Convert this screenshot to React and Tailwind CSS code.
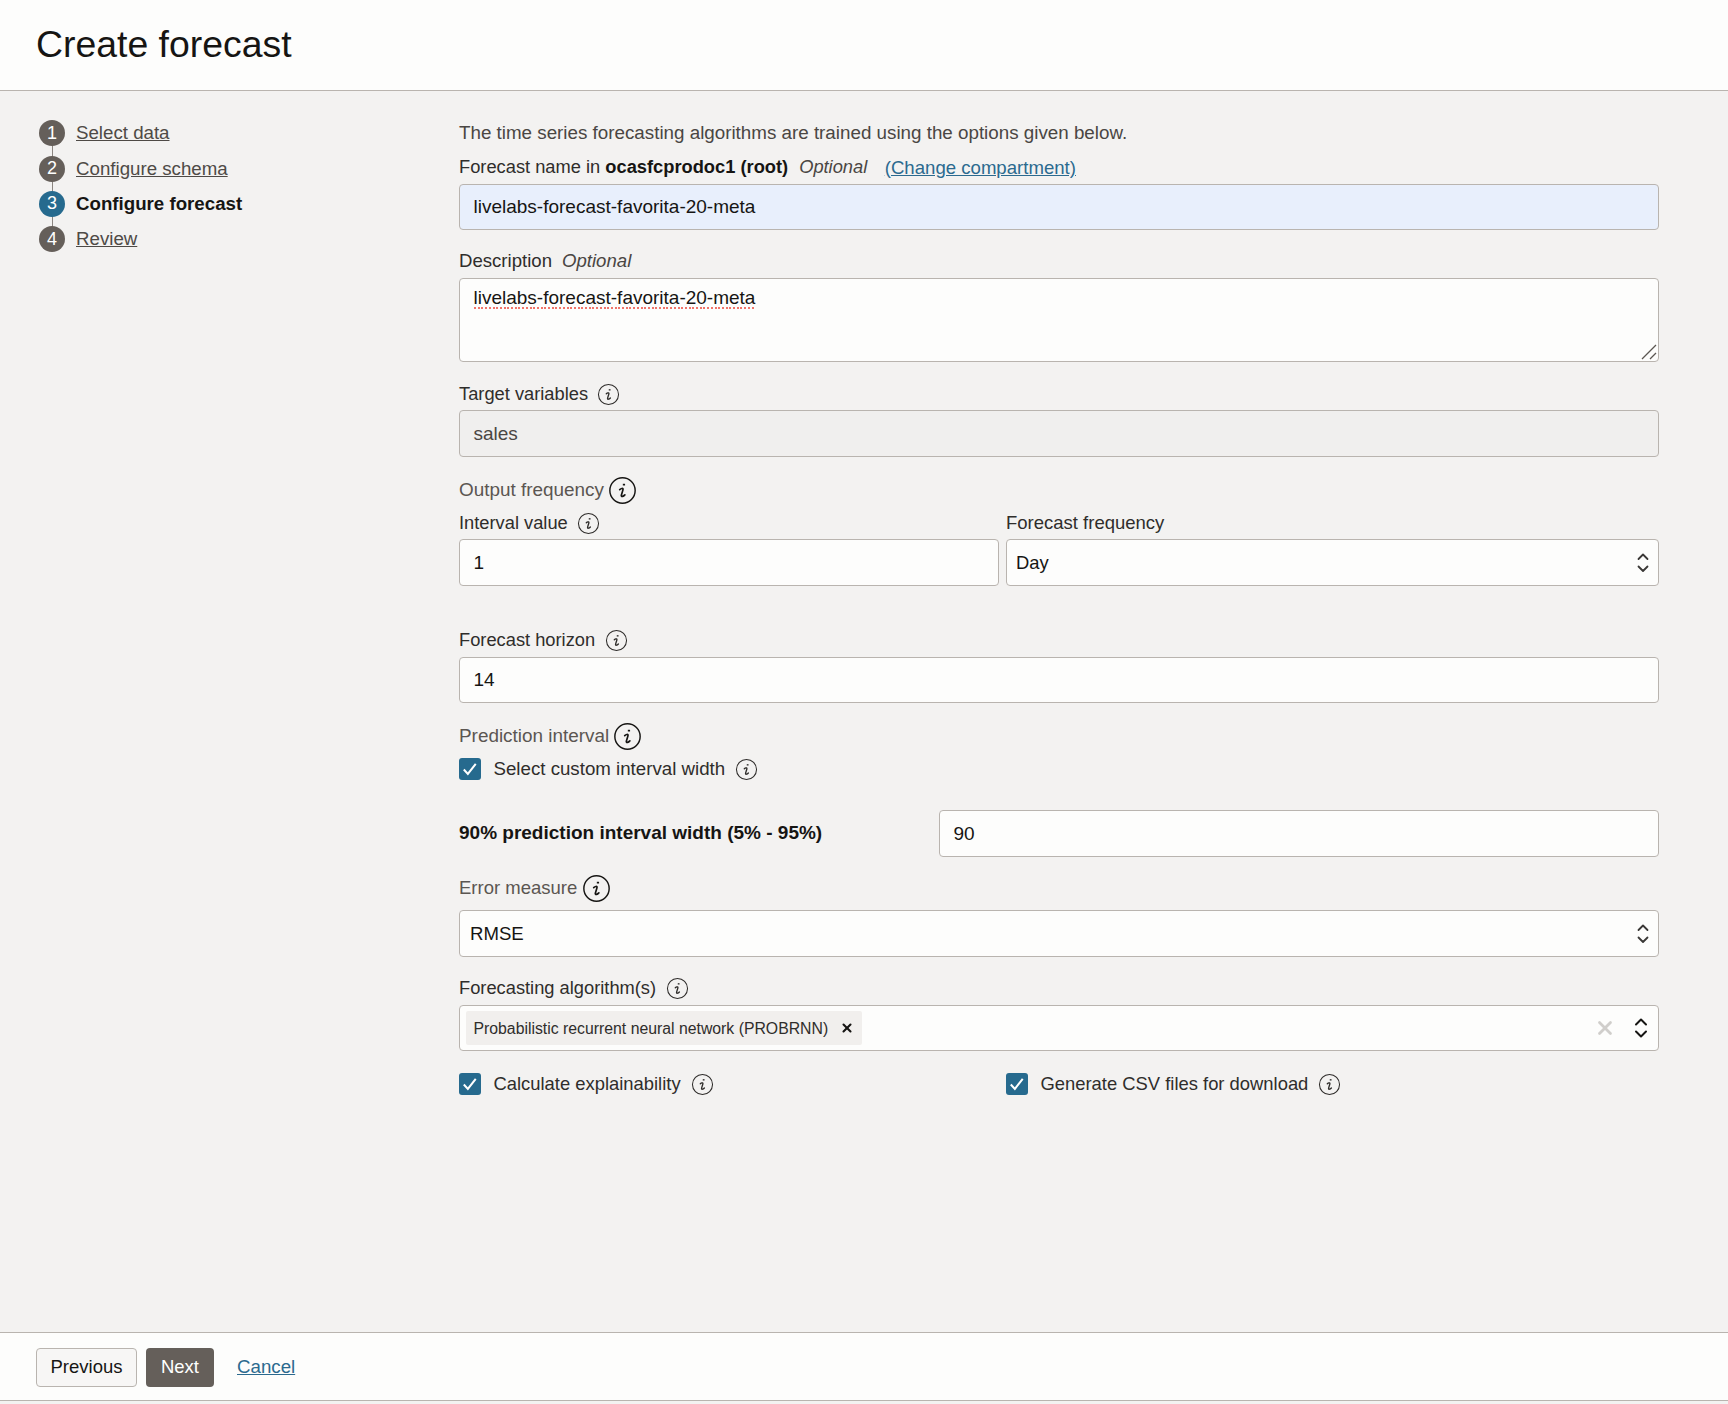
import { ChevronUp, ChevronDown, X } from 'lucide-react'

function Info({ big }) {
  const size = big ? 29 : 23
  return (
    <svg width={size} height={size} viewBox="0 0 22 22" fill="none" className="shrink-0" stroke={big ? '#161513' : '#2d2b29'}>
      <circle cx="11" cy="11" r="9.6" strokeWidth={big ? 1.1 : 1} />
      <path d="M12.1 5.9v1.3" strokeWidth="1.7" />
      <path d="M8.9 10.3c1-.9 2.4-1.2 2.5-.3.1.8-1.4 4.2-1.3 5 .1 1 1.5.5 2.7-.7" strokeWidth="1.3" strokeLinecap="round" />
    </svg>
  )
}

function Label({ children, className = '', muted }) {
  return (
    <div className={`h-6 flex items-center ${muted ? 'text-[18.9px] text-[#5b5652]' : 'text-[18.3px] text-[#2f2d2b]'} ${className}`}>
      {children}
    </div>
  )
}

function Field({ children, className = '', bg = 'bg-[#fdfdfc]' }) {
  return (
    <div className={`relative flex items-center border border-[#b9b4af] rounded-[4px] pl-[13.5px] text-[19px] text-[#161513] ${bg} ${className}`}>
      {children}
    </div>
  )
}

function Chevrons({ dark }) {
  return (
    <span className={`flex flex-col items-center absolute top-1/2 -translate-y-1/2 ${dark ? 'right-[7px] text-[#161513]' : 'right-[6px] text-[#3a3836]'}`}>
      <ChevronUp size={dark ? 20 : 18} strokeWidth={2.4} className={dark ? '-mb-[8px]' : '-mb-[5.5px]'} />
      <ChevronDown size={dark ? 20 : 18} strokeWidth={2.4} />
    </span>
  )
}

function Check({ label, size = 'text-[18.4px]' }) {
  return (
    <div className="h-[22px] flex items-center">
      <span className="w-[22px] h-[22px] rounded-[3px] bg-[#266a8e] flex items-center justify-center">
        <svg width="18" height="18" viewBox="0 0 16 16" fill="none" stroke="#fff" strokeWidth="1.8">
          <path d="M2.5 8.5l3.6 3.8 7-8.8" />
        </svg>
      </span>
      <span className={`ml-[12.5px] text-[#2f2d2b] ${size}`}>{label}</span>
      <span className="ml-[10px] flex"><Info /></span>
    </div>
  )
}

const steps = [
  { n: 1, name: 'Select data' },
  { n: 2, name: 'Configure schema' },
  { n: 3, name: 'Configure forecast', active: true },
  { n: 4, name: 'Review' },
]

export default function App() {
  return (
    <div className="min-h-[1404px] flex flex-col bg-[#f3f2f1] text-[#161513] font-['Liberation_Sans',Arial,sans-serif]">
      {/* Page title */}
      <header className="h-[91px] shrink-0 flex items-center px-9 bg-[#fdfdfc] border-b border-[#b9b4af]">
        <h1 className="text-[37.4px] leading-none font-normal">Create forecast</h1>
      </header>

      <main className="flex-1 flex">
        {/* Wizard steps */}
        <nav className="w-[459px] shrink-0 pl-[39px] pt-[24.5px]">
          {steps.map((s) => (
            <div key={s.n} className="relative flex items-center h-[35.4px]">
              {s.n < 4 && <span className="absolute left-[12.5px] top-[20px] h-[30px] w-px bg-[#8b8580]" />}
              <span className={`relative w-[26px] h-[26px] rounded-full text-white text-[18px] flex items-center justify-center ${s.active ? 'bg-[#266a8e]' : 'bg-[#655f5a]'}`}>
                {s.n}
              </span>
              {s.active ? (
                <span className="ml-[11px] text-[18.7px] font-bold text-[#161513]">{s.name}</span>
              ) : (
                <a className="ml-[11px] text-[18.7px] text-[#4e4a46] underline">{s.name}</a>
              )}
            </div>
          ))}
        </nav>

        {/* Form */}
        <section className="w-[1200px] pt-[30px]">
          <div className="h-[25px] flex items-center text-[18.8px] text-[#4a4643]">
            The time series forecasting algorithms are trained using the options given below.
          </div>

          <Label className="mt-[9px]">
            Forecast name in&nbsp;<b className="text-[#161513]">ocasfcprodoc1 (root)</b>
            <i className="ml-[11px] text-[#4a4643]">Optional</i>
            <a className="ml-[17.5px] pt-px text-[18.6px] text-[#2b6a8f] underline">(Change compartment)</a>
          </Label>
          <Field className="mt-[5px] h-[46px]" bg="bg-[#e8effc]">livelabs-forecast-favorita-20-meta</Field>

          <Label className="mt-[19px] !text-[18.6px]">
            Description<i className="ml-[10px] text-[#4a4643]">Optional</i>
          </Label>
          <Field className="mt-[5px] h-[84px] !items-start pt-[5px]">
            <span className="relative">
              livelabs-forecast-favorita-20-meta
              <span className="absolute left-0 right-0 top-[23px] h-[2px] bg-[repeating-linear-gradient(90deg,#f0746a_0,#f0746a_2px,transparent_2px,transparent_3.7px)]" />
            </span>
            <svg width="16" height="16" viewBox="0 0 16 16" className="absolute right-px bottom-px" stroke="#5b5652" strokeWidth="1.3">
              <path d="M1 15L15 1M9 15l6-6" />
            </svg>
          </Field>

          <Label className="mt-[20px]">
            Target variables<span className="ml-[9px] flex"><Info /></span>
          </Label>
          <Field className="mt-[4px] h-[47px] pt-px !text-[#4a4643]" bg="bg-[#f0efee]">sales</Field>

          <Label className="mt-[21px]" muted>
            Output frequency<span className="ml-[4px] flex"><Info big /></span>
          </Label>

          <div className="mt-[9px] flex gap-[7px]">
            <div className="w-[540px]">
              <Label>
                Interval value<span className="ml-[9px] flex"><Info /></span>
              </Label>
              <Field className="mt-[4px] h-[47px] pt-px">1</Field>
            </div>
            <div className="flex-1">
              <Label className="!text-[18.5px]">Forecast frequency</Label>
              <Field className="mt-[4px] h-[47px] pt-px !pl-[9px] !text-[18.4px]">
                Day
                <Chevrons />
              </Field>
            </div>
          </div>

          <Label className="mt-[42px]">
            Forecast horizon<span className="ml-[10px] flex"><Info /></span>
          </Label>
          <Field className="mt-[5px] h-[46px] pt-px">14</Field>

          <Label className="mt-[21px]" muted>
            Prediction interval<span className="ml-[4px] flex"><Info big /></span>
          </Label>
          <div className="mt-[10px]">
            <Check label="Select custom interval width" size="text-[18.7px]" />
          </div>

          <div className="mt-[30px] flex items-center">
            <div className="w-[480px] text-[19px] font-bold text-[#161513] -mt-[1px]">90% prediction interval width (5% - 95%)</div>
            <Field className="flex-1 h-[47px] pt-px">90</Field>
          </div>

          <Label className="mt-[19px] !text-[18.5px]" muted>
            Error measure<span className="ml-[5px] flex"><Info big /></span>
          </Label>
          <Field className="mt-[10px] h-[47px] pt-px !pl-[10px] !text-[18.6px]">
            RMSE
            <Chevrons />
          </Field>

          <Label className="mt-[19px]">
            Forecasting algorithm(s)<span className="ml-[10px] flex"><Info /></span>
          </Label>
          <Field className="mt-[5px] h-[46px] !pl-[6px]">
            <span className="h-[34px] w-[396px] flex items-center justify-between pl-[7.5px] pr-[8px] pt-[2px] rounded-[2px] bg-[#f1efed] text-[15.8px] text-[#2f2d2b]">
              Probabilistic recurrent neural network (PROBRNN)
              <X size={14} strokeWidth={3.6} className="text-[#161513] -mt-[3px]" />
            </span>
            <X size={22} strokeWidth={3} className="absolute right-[42px] top-1/2 -translate-y-1/2 text-[#d0cecb]" />
            <Chevrons dark />
          </Field>

          <div className="mt-[22px] flex">
            <div className="w-[547px]">
              <Check label="Calculate explainability" />
            </div>
            <Check label="Generate CSV files for download" />
          </div>
        </section>
      </main>

      {/* Wizard actions */}
      <footer className="h-[69px] shrink-0 flex items-center px-9 pt-px bg-[#fdfdfc] border-y border-[#b9b4af]">
        <button className="h-[39px] w-[101px] rounded-[4px] border border-[#b9b4af] bg-[#f7f6f5] text-[18.5px] text-[#161513]">Previous</button>
        <button className="ml-[9px] h-[39px] w-[68px] rounded-[4px] bg-[#655f5a] text-[18.5px] text-white">Next</button>
        <a className="ml-[23px] text-[18.7px] text-[#2b6a8f] underline">Cancel</a>
      </footer>
      <div className="h-[3px] shrink-0" />
    </div>
  )
}
